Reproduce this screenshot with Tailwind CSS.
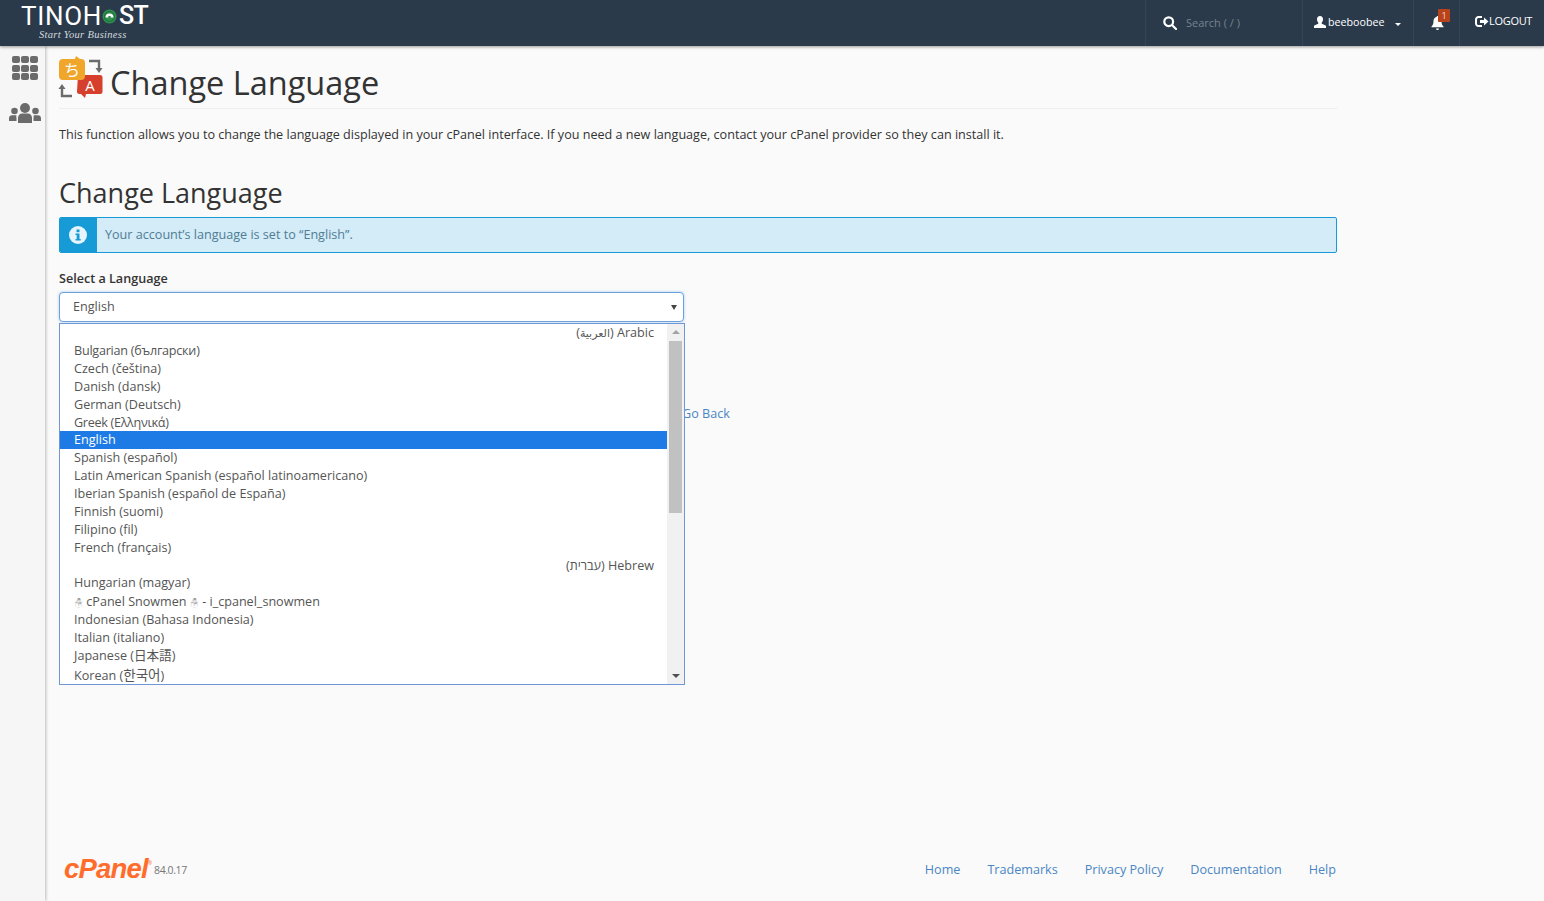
<!DOCTYPE html>
<html lang="en">

<head>
    <meta charset="UTF-8">
    <meta name="viewport" content="width=device-width, initial-scale=1.0">
    <title>Change Language</title>
    <script src="https://cdn.jsdelivr.net/npm/@tailwindcss/browser@4"></script>
</head>

<body class="h-[901px] overflow-hidden bg-[#fafafa] text-[12.6px] text-[#333] font-['Open_Sans','Noto_Sans_CJK_JP','DejaVu_Sans',sans-serif]">
<div class="flex h-full flex-col">
    <!-- Top bar -->
    <header class="relative z-20 flex h-[46px] shrink-0 items-stretch justify-between bg-[#2a3a4b] shadow-[0_1px_3px_rgba(0,0,0,0.4)]">
        <div class="pl-[21px] pt-[3px] text-white">
            <div class="flex h-[25px] items-center font-['Roboto',sans-serif] text-[26px] font-normal leading-none tracking-[0.7px]">
                <span>TINOH</span>
                <svg class="mr-[2px] mt-[1px]" width="15" height="15" viewBox="0 0 15 15">
                    <circle cx="7.5" cy="7.5" r="7" fill="#2f8f4e"/>
                    <circle cx="7.5" cy="7.5" r="5" fill="none" stroke="#1f6b3a" stroke-width="1"/>
                    <path d="M3.5 8.5a4 4 0 0 1 8 0z" fill="#fff"/>
                    <rect x="6.3" y="7" width="2.4" height="2.5" fill="#2f8f4e"/>
                </svg>
                <span class="text-[25px] font-medium tracking-[-0.8px]">ST</span>
            </div>
            <div class="mt-[1px] pl-[18px] font-['Liberation_Serif',serif] text-[10.5px] italic leading-[12px] tracking-[0.3px] text-[#d5dade]">Start Your Business</div>
        </div>
        <div class="flex items-stretch">
            <div class="flex w-[157px] items-center border-l border-[#33455a] pl-[17px]">
                <svg width="14" height="14" viewBox="0 0 14 14" fill="none" stroke="#fff" stroke-width="2.2">
                    <circle cx="5.7" cy="5.7" r="4.4"/>
                    <path d="M9 9l4 4" stroke-linecap="round"/>
                </svg>
                <span class="ml-[9px] text-[11px] text-[#75828e]">Search ( / )</span>
            </div>
            <div class="flex w-[111px] items-center border-l border-[#33455a] pb-[2px] pl-[11px] text-[10.7px] text-white">
                <svg width="12" height="12" viewBox="0 0 12 12" fill="#fff">
                    <path d="M6 0c2 0 3 1.400 3 3.300 0 1.500-.6 2.700-1.300 3.400v1l3.600 1.500c.5.200.7.600.7 1.100V12H0v-1.700c0-.5.200-.9.700-1.100l3.600-1.500v-1C3.600 6 3 4.800 3 3.300 3 1.400 4 0 6 0z"/>
                </svg>
                <span class="ml-[2px]">beeboobee</span>
                <span class="ml-[11px] mt-[5px] h-0 w-0 border-x-[3px] border-t-[3px] border-x-transparent border-t-white"></span>
            </div>
            <div class="relative flex w-[46px] items-center border-l border-[#33455a] pb-[2px] pl-[16px]">
                <svg width="15" height="15" viewBox="0 0 15 15" fill="#fff">
                    <path d="M7.500 1a1 1 0 0 1 1 1c2 .5 3 2 3 4 0 3 .7 4.200 2 5.500v.8h-12v-.8C2.800 10.200 3.500 9 3.500 6c0-2 1-3.500 3-4a1 1 0 0 1 1-1zM6 13.500h3a1.500 1.500 0 0 1-3 0z"/>
                </svg>
                <span class="absolute left-[24px] top-[9px] flex h-[13px] w-[12px] items-center justify-center rounded-[1px] bg-[#b8431a] text-[9px] leading-none text-[#f4d9cc]">1</span>
            </div>
            <div class="flex w-[85px] items-center border-l border-[#33455a] pb-[4px] pl-[15px] text-[11px] tracking-[-0.3px] text-white">
                <svg width="14" height="11" viewBox="0 0 14 11" fill="none">
                    <path d="M7 1H3.500A2.500 2.500 0 0 0 1 3.500v4A2.500 2.500 0 0 0 3.500 10H7" stroke="#fff" stroke-width="2"/>
                    <path d="M5 4h4V1.500L13.500 5.500 9 9.500V7H5z" fill="#fff"/>
                </svg>
                <span>LOGOUT</span>
            </div>
        </div>
    </header>

    <div class="flex min-h-0 flex-1">
        <!-- Sidebar -->
        <aside class="z-10 flex w-[45px] shrink-0 flex-col items-center bg-[#f6f6f6] pl-[5px] pt-[10px] shadow-[1px_0_3px_rgba(0,0,0,0.25)]">
            <div class="grid w-[26px] grid-cols-3 gap-[1.5px]">
                <span class="h-[7px] rounded-[2px] bg-[#6b6b6b]"></span>
                <span class="h-[7px] rounded-[2px] bg-[#6b6b6b]"></span>
                <span class="h-[7px] rounded-[2px] bg-[#6b6b6b]"></span>
                <span class="h-[7px] rounded-[2px] bg-[#6b6b6b]"></span>
                <span class="h-[7px] rounded-[2px] bg-[#6b6b6b]"></span>
                <span class="h-[7px] rounded-[2px] bg-[#6b6b6b]"></span>
                <span class="h-[7px] rounded-[2px] bg-[#6b6b6b]"></span>
                <span class="h-[7px] rounded-[2px] bg-[#6b6b6b]"></span>
                <span class="h-[7px] rounded-[2px] bg-[#6b6b6b]"></span>
            </div>
            <svg class="mt-[23px]" width="32" height="20" viewBox="0 0 32 20" fill="#6b6b6b">
                <circle cx="16" cy="5" r="5"/>
                <path d="M9 20v-5c0-3 2-4.500 4-4.500h6c2 0 4 1.500 4 4.500v5z"/>
                <circle cx="5.500" cy="8" r="3.300"/>
                <path d="M0 18v-2.500c0-2 1.200-3.200 3-3.200h4.500C7 13 7.500 14 7.500 15v3z"/>
                <circle cx="26.500" cy="8" r="3.300"/>
                <path d="M32 18v-2.500c0-2-1.200-3.200-3-3.200h-4.500c.5.700 0 1.700 0 2.700v3z"/>
            </svg>
        </aside>

        <!-- Content -->
        <main class="flex min-w-0 flex-1 flex-col pl-[14px]">
            <div class="w-[1278px]">
                <div class="flex h-[63px] items-end border-b border-[#eee] pb-[2px]">
                    <svg class="mb-[6px] shrink-0 overflow-visible" width="44" height="44" viewBox="0 0 44 44">
                        <path d="M30 5h10v9" fill="none" stroke="#6b6b6b" stroke-width="2.4"/>
                        <path d="M36.500 12l3.500 5 3.500-5z" fill="#6b6b6b"/>
                        <path d="M13 40H3v-9" fill="none" stroke="#6b6b6b" stroke-width="2.4"/>
                        <path d="M-.5 33L3 28l3.500 5z" fill="#6b6b6b"/>
                        <path d="M19 19h22a2.500 2.500 0 0 1 2.500 2.500v14a2.500 2.500 0 0 1-2.500 2.500H27l-1 4-4-4h-1.500a2.500 2.500 0 0 1-2.500-2.500z" fill="#d63f2b"/>
                        <text x="31" y="34.500" font-size="15" fill="#fff" text-anchor="middle">A</text>
                        <path d="M4 3h12l1-3 4 3h1a4 4 0 0 1 4 4v13a4 4 0 0 1-4 4H4a4 4 0 0 1-4-4V7a4 4 0 0 1 4-4z" fill="#f0a62b"/>
                        <text x="13" y="20" font-size="16" fill="#fff" text-anchor="middle">ち</text>
                    </svg>
                    <h1 class="ml-[7px] text-[32.5px] font-normal leading-[46px]">Change Language</h1>
                </div>

                <p class="mt-[17px] leading-[18px]">This function allows you to change the language displayed in your cPanel interface. If you need a new language, contact your cPanel provider so they can install it.</p>

                <h2 class="mt-[29px] text-[27px] font-normal leading-[40px]">Change Language</h2>

                <div class="mt-[4px] flex h-[36px] overflow-hidden rounded-[2px] border border-[#179bd7] bg-[#d4ebf8]">
                    <div class="flex w-[37px] shrink-0 items-center justify-center bg-[#179bd7] pr-[1px]">
                        <svg width="18" height="18" viewBox="0 0 18 18">
                            <circle cx="9" cy="9" r="9" fill="#e6f4fb"/>
                            <rect x="7.500" y="3.500" width="3" height="2.700" fill="#179bd7"/>
                            <path d="M6.500 7.500h4v5.500h1.200v1.500H6.500V13h1.200V9H6.500z" fill="#179bd7"/>
                        </svg>
                    </div>
                    <div class="flex items-center pl-[8px] text-[#4f7d93]">Your account’s language is set to “English”.</div>
                </div>

                <!-- Language form -->
                <form class="relative mt-[17px]">
                    <label class="block font-semibold leading-[18px]">Select a Language</label>
                    <div class="mt-[4px] flex h-[30px] w-[625px] items-center justify-between rounded-[4px] border border-[#6ea1dc] bg-white pl-[13px] pr-[6px] pt-[1px] text-[#555] shadow-[0_0_3px_rgba(102,175,233,0.6)]">
                        <span>English</span>
                        <span class="h-0 w-0 border-x-[3px] border-t-[5px] border-x-transparent border-t-[#444]"></span>
                    </div>
                    <a class="mt-[83px] block pl-[623px] leading-[18px] text-[#4a86c5]">Go Back</a>

                    <!-- Open dropdown -->
                    <div class="absolute left-0 top-[53px] flex h-[362px] w-[626px] overflow-hidden border border-[#6f97d6] bg-white text-[#555]">
                        <ul class="w-[607px] shrink-0">
                            <li dir="rtl" class="h-[18px] pr-[13px] leading-[17px]">Arabic (<span class="text-[11px]">العربية</span>)</li>
                            <li class="h-[18px] pl-[14px] leading-[18px] tracking-[-0.24px]">Bulgarian (български)</li>
                            <li class="h-[18px] pl-[14px] leading-[18px]">Czech (čeština)</li>
                            <li class="h-[18px] pl-[14px] leading-[18px]">Danish (dansk)</li>
                            <li class="h-[18px] pl-[14px] leading-[18px]">German (Deutsch)</li>
                            <li class="h-[17px] pl-[14px] leading-[18px] tracking-[-0.3px]">Greek (Ελληνικά)</li>
                            <li class="h-[18px] bg-[#1e7be6] pl-[14px] leading-[18px] text-white">English</li>
                            <li class="h-[18px] pl-[14px] leading-[18px]">Spanish (español)</li>
                            <li class="h-[18px] pl-[14px] leading-[18px]">Latin American Spanish (español latinoamericano)</li>
                            <li class="h-[18px] pl-[14px] leading-[18px]">Iberian Spanish (español de España)</li>
                            <li class="h-[18px] pl-[14px] leading-[18px]">Finnish (suomi)</li>
                            <li class="h-[18px] pl-[14px] leading-[18px]">Filipino (fil)</li>
                            <li class="h-[18px] pl-[14px] leading-[18px]">French (français)</li>
                            <li dir="rtl" class="h-[17px] pr-[13px] leading-[18px]">Hebrew (עברית)</li>
                            <li class="h-[19px] pl-[14px] leading-[18px]">Hungarian (magyar)</li>
                            <li class="h-[18px] pl-[14px] leading-[18px]"><span class="text-[9px] text-[#999]">☃</span> cPanel Snowmen <span class="text-[9px] text-[#999]">☃</span> - i_cpanel_snowmen</li>
                            <li class="h-[18px] pl-[14px] leading-[18px]">Indonesian (Bahasa Indonesia)</li>
                            <li class="h-[18px] pl-[14px] leading-[18px]">Italian (italiano)</li>
                            <li class="h-[19px] pl-[14px] leading-[18px]">Japanese (日本語)</li>
                            <li class="h-[18px] pl-[14px] leading-[18px] font-['Open_Sans','Noto_Sans_CJK_KR',sans-serif]">Korean (<span class="text-[13.5px]">한국어</span>)</li>
                        </ul>
                        <div class="flex w-[17px] flex-col items-center justify-between bg-[#f1f1f1] py-[6px]">
                            <span class="h-0 w-0 border-x-[4px] border-b-[4px] border-x-transparent border-b-[#a3a3a3]"></span>
                            <span class="absolute right-[2px] top-[17px] h-[172px] w-[13px] bg-[#c1c1c1]"></span>
                            <span class="h-0 w-0 border-x-[4px] border-t-[4px] border-x-transparent border-t-[#505050]"></span>
                        </div>
                    </div>
                </form>
            </div>

            <!-- Footer -->
            <footer class="mt-auto flex h-[50px] w-[1277px] items-start justify-between pl-[5px] pt-[6px]">
                <div class="flex items-center">
                    <span class="font-['Liberation_Sans',sans-serif] text-[27.5px] font-bold italic leading-[24px] tracking-[-0.8px] text-[#ff6c2c]">cPanel</span>
                    <span class="mb-[12px] text-[5px] leading-none text-[#ff6c2c]">®</span>
                    <span class="ml-[2px] mt-[3px] text-[10.5px] tracking-[-0.4px] text-[#777]">84.0.17</span>
                </div>
                <nav class="flex gap-[27px] pt-[4px] text-[#4a86c5]">
                    <a>Home</a>
                    <a>Trademarks</a>
                    <a>Privacy Policy</a>
                    <a>Documentation</a>
                    <a>Help</a>
                </nav>
            </footer>
        </main>
    </div>
</div>
</body>

</html>
